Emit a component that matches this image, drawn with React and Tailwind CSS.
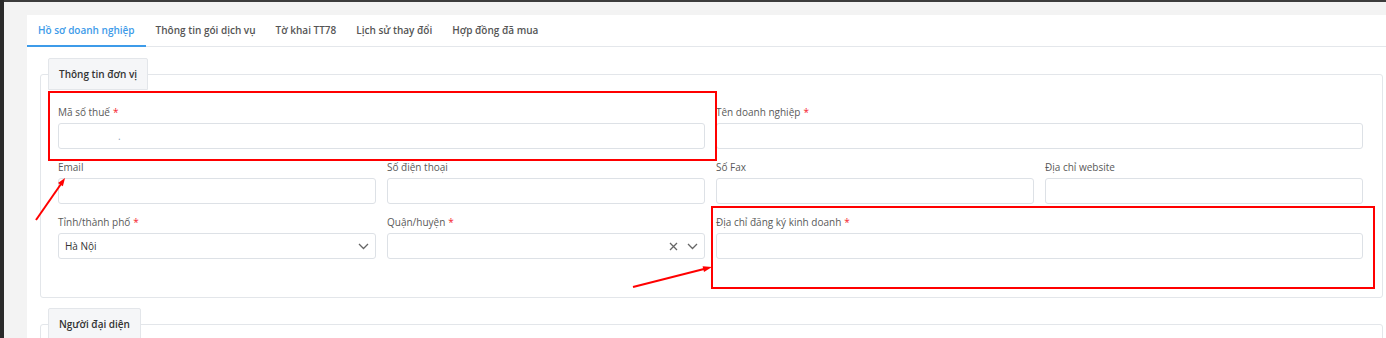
import React from 'react';

const tabs = ['Hồ sơ doanh nghiệp', 'Thông tin gói dịch vụ', 'Tờ khai TT78', 'Lịch sử thay đổi', 'Hợp đồng đã mua'];

const Chevron = () => (
    <svg width="11" height="7" viewBox="0 0 11 7" className="shrink-0">
        <polyline points="1,1 5.5,5.5 10,1" fill="none" stroke="#666" strokeWidth="1.3" />
    </svg>
);

const Cross = () => (
    <svg width="9" height="9" viewBox="0 0 9 9" className="shrink-0">
        <path d="M1 1 L8 8 M8 1 L1 8" stroke="#666" strokeWidth="1.3" />
    </svg>
);

const Label = ({ text, required }) => (
    <div className="mb-[2px] h-[18px] text-[10px] leading-[18px] text-[#595959]">
        {text}
        {required && <span className="ml-[3px] text-[#f5222d]">*</span>}
    </div>
);

const Field = ({ label, required, span, children }) => (
    <div className={span ? 'col-span-2' : ''}>
        <Label text={label} required={required} />
        <div className="flex h-[26px] items-center rounded-[3px] border border-[#dde1e6] bg-white px-[6px] text-[10px] text-[#333]">
            {children}
        </div>
    </div>
);

const Legend = ({ children }) => (
    <legend className="ml-[7px] h-[32px] rounded-t-[2px] border border-[#e3e6ea] bg-[#f5f6f8] px-[10px] text-[10px] font-semibold leading-[30px] text-[#333]">
        {children}
    </legend>
);

const App = () => {
    return (
        <div className="relative flex h-[338px] w-[1386px] overflow-hidden bg-[#f3f3f3] font-['Open_Sans',sans-serif]">
            <div className="w-[4px] shrink-0 bg-[#2a2a2a]" />
            <div className="flex flex-1 flex-col border-t-2 border-[#3c3c3c] pl-[23px] pt-[13px]">
                <div className="flex-1 bg-white">
                    {/* tabs */}
                    <div className="flex h-[32px] border-b border-[#e4e7eb]">
                        {tabs.map((t, i) => (
                            <div
                                key={t}
                                className={
                                    i === 0
                                        ? 'flex h-[32px] items-center border-b-2 border-[#3d9be9] px-[11px] text-[10px] font-semibold text-[#3d9be9]'
                                        : 'flex h-[32px] items-center border-b-2 border-transparent px-[10px] text-[10px] font-semibold text-[#555]'
                                }
                            >
                                {t}
                            </div>
                        ))}
                    </div>

                    <fieldset className="ml-[13px] mt-[11px] w-[1343px] rounded-[3px] border border-[#e3e6ea]">
                        <Legend>Thông tin đơn vị</Legend>
                        <div className="grid grid-cols-4 gap-x-[11px] gap-y-[9px] pb-[38px] pl-[17px] pr-[19px] pt-[13px]">
                            <Field label="Mã số thuế" required span>
                                <span className="ml-[53px] text-[#8aa0b8]">.</span>
                            </Field>
                            <Field label="Tên doanh nghiệp" required span />
                            <Field label="Email" />
                            <Field label="Số điện thoại" />
                            <Field label="Số Fax" />
                            <Field label="Địa chỉ website" />
                            <Field label="Tỉnh/thành phố" required>
                                <span className="flex-1">Hà Nội</span>
                                <Chevron />
                            </Field>
                            <Field label="Quận/huyện" required>
                                <span className="flex-1" />
                                <Cross />
                                <span className="w-[9px]" />
                                <Chevron />
                            </Field>
                            <Field label="Địa chỉ đăng ký kinh doanh" required span />
                        </div>
                    </fieldset>

                    <fieldset className="ml-[13px] mt-[10px] h-[60px] w-[1343px] rounded-[3px] border border-[#e3e6ea]">
                        <Legend>Người đại diện</Legend>
                    </fieldset>
                </div>
            </div>

            {/* annotations */}
            <div className="pointer-events-none absolute left-[48px] top-[91px] h-[70px] w-[669px] border-2 border-[#ff0000]" />
            <div className="pointer-events-none absolute left-[711px] top-[206px] h-[83px] w-[664px] border-2 border-[#ff0000]" />
            <svg className="pointer-events-none absolute left-0 top-0" width="1386" height="338">
                <line x1="36" y1="220" x2="61" y2="184" stroke="#f00" strokeWidth="2" />
                <polygon points="65,178 62.9,186.3 58,182.9" fill="#f00" />
                <line x1="633" y1="287" x2="704" y2="269" stroke="#f00" strokeWidth="2" />
                <polygon points="712,267 704,272.1 702.6,266.3" fill="#f00" />
            </svg>
        </div>
    );
};

export default App;
